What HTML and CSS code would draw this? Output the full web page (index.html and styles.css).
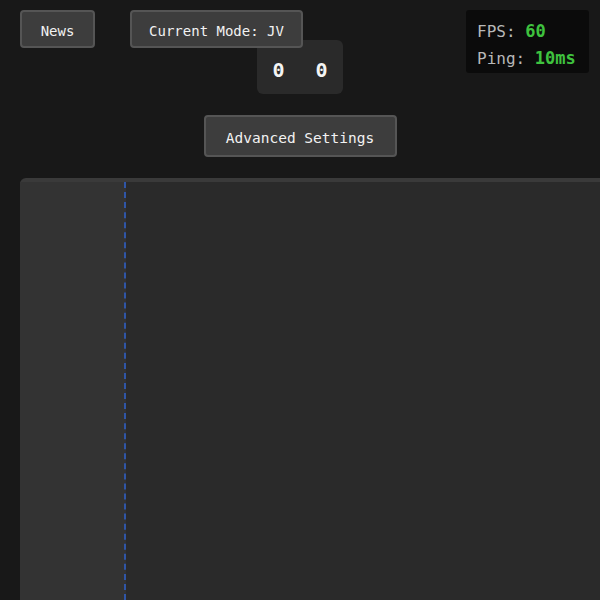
FILE: index.html
```html
<!DOCTYPE html>
<html lang="en">
<head>
    <meta charset="UTF-8">
    <meta name="viewport" content="width=device-width, initial-scale=1.0">
    <title>Game</title>
    <link rel="stylesheet" href="styles.css">
</head>
<body>
    <div class="page">
        <div class="top-bar">
            <button class="btn btn-news">News</button>
            <button class="btn btn-mode">Current Mode: JV</button>
        </div>

        <div class="score-board">
            <span class="score">0</span>
            <span class="score">0</span>
        </div>

        <div class="settings-row">
            <button class="btn btn-settings">Advanced Settings</button>
        </div>

        <div class="game-area">
            <div class="side-zone"></div>
            <div class="field"></div>
        </div>
    </div>

    <div class="stats">
        <div class="stat-line">FPS: <span class="stat-value">60</span></div>
        <div class="stat-line">Ping: <span class="stat-value">10ms</span></div>
    </div>
</body>
</html>
```

FILE: styles.css
```css
html, body {
    height: 100%;
}

body {
    margin: 0;
    background-color: #181818;
    color: #eee;
    font-family: "DejaVu Sans Mono", monospace;
    overflow: hidden;
}

.page {
    display: flex;
    flex-direction: column;
    height: 100%;
    padding: 10px 0 0 20px;
    box-sizing: border-box;
}

.top-bar {
    display: flex;
    gap: 35px;
    position: relative;
    z-index: 2;
}

.btn {
    background-color: #3d3d3d;
    color: #f2f2f2;
    border: 2px solid #555;
    border-radius: 4px;
    font-family: "DejaVu Sans Mono", monospace;
    font-size: 14px;
    height: 38px;
    padding: 3px 0 0;
    cursor: pointer;
}

.btn-news {
    width: 75px;
}

.btn-mode {
    width: 173px;
}

/* score sits under the top bar, centered on the page */
.score-board {
    align-self: center;
    margin: -8px 0 0 -20px;
    width: 86px;
    height: 54px;
    background-color: #2a2a2a;
    border-radius: 6px;
    display: flex;
    justify-content: center;
    align-items: center;
    gap: 31px;
    box-sizing: border-box;
    padding-top: 6px;
}

.score {
    font-size: 20px;
    font-weight: bold;
    color: #f4f4f4;
}

.settings-row {
    display: flex;
    justify-content: center;
    margin: 21px 0 0 -20px;
}

.btn-settings {
    width: 193px;
    height: 42px;
    font-size: 14.5px;
}

.game-area {
    margin-top: 21px;
    flex: 1;
    display: flex;
    background-color: #2a2a2a;
    border-top: 4px solid #3a3a3a;
    border-top-left-radius: 6px;
}

.side-zone {
    width: 104px;
    background-color: #333;
    border-right: 2px dashed #2f55a6;
}

.field {
    flex: 1;
}

/* HUD in the top right corner */
.stats {
    position: absolute;
    top: 10px;
    right: 11px;
    width: 123px;
    height: 63px;
    box-sizing: border-box;
    padding: 8px 0 0 11px;
    background-color: #0b0b0b;
    border-radius: 3px;
    color: #b8b8b8;
    font-size: 16px;
    line-height: 27px;
}

.stat-value {
    color: #3fc23f;
    font-weight: bold;
    font-size: 17px;
}
```
